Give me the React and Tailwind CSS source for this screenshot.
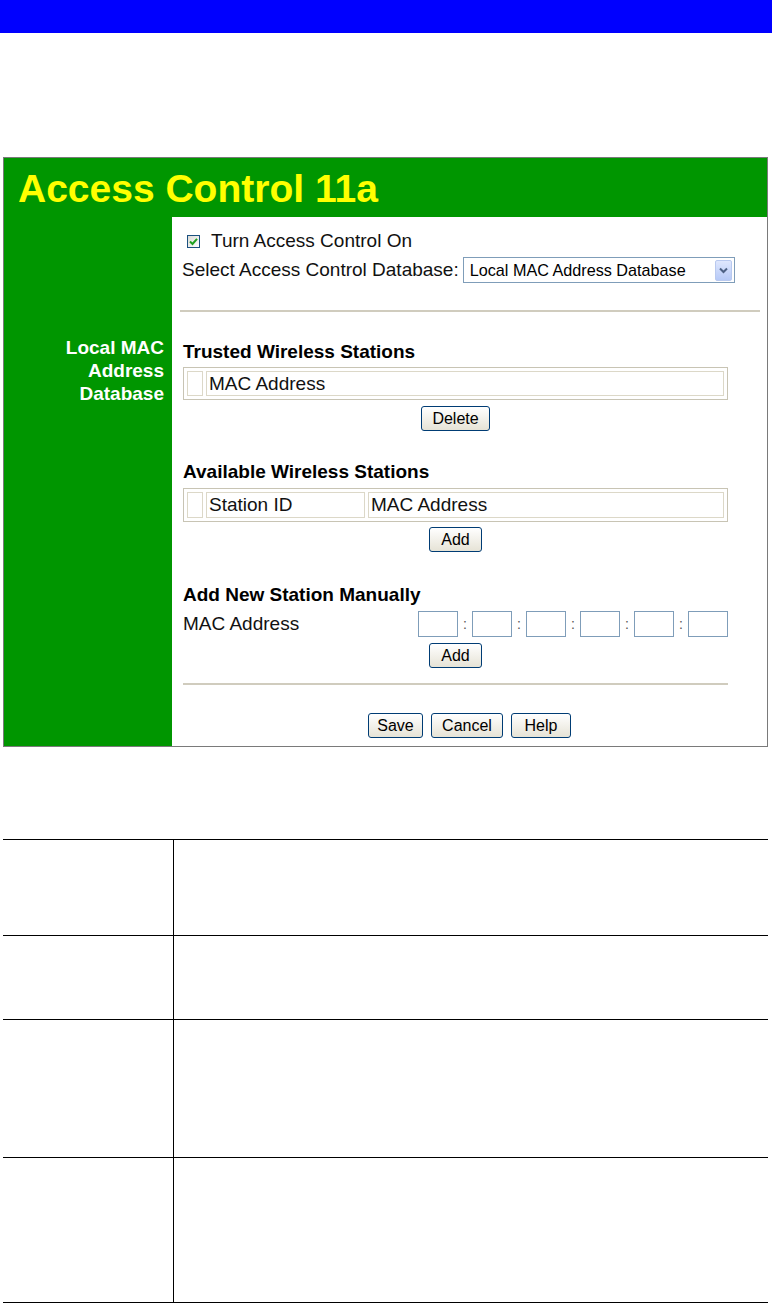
import React from 'react';

const font = "font-['Liberation_Sans',Arial,sans-serif]";

function XpButton({ children, w }) {
  return (
    <button
      className={`${w} h-[25px] rounded-[3px] border border-[#003c74] bg-gradient-to-b from-white to-[#e6e3d6] text-[16px] leading-none text-black`}
    >
      {children}
    </button>
  );
}

function Cell({ children, className = '' }) {
  return (
    <div className={`h-full border border-[#dcd8c8] pl-[2px] flex items-center text-[19px] leading-[22px] text-[#111] ${className}`}>
      {children}
    </div>
  );
}

export default function App() {
  const macBoxes = [0, 1, 2, 3, 4, 5];
  const rows = ['h-[96px]', 'h-[84px]', 'h-[138px]', 'h-[145px]'];

  return (
    <div className={`w-[772px] h-[1304px] bg-white ${font}`}>
      {/* top bar */}
      <div className="h-[33px] bg-[#0000ff]" />

      {/* router screen */}
      <div className="mt-[124px] ml-[3px] w-[765px] border border-[#7a7a7a] bg-[#009600]">
        <div className="h-[59px] pl-[14px] pt-[9px]">
          <h1 className="text-[39px] leading-[44px] font-bold text-[#ffff00]">Access Control 11a</h1>
        </div>

        <div className="flex">
          <div className="w-[168px] pt-[119px] pr-[8px] text-right text-white font-bold text-[19px] leading-[23px]">
            Local MAC<br />Address<br />Database
          </div>

          <div className="w-[595px] bg-white pt-[13px] pb-[8px] text-[#111]">
            {/* enable */}
            <div className="h-[22px] pl-[15px] flex items-center gap-[11px] text-[19px] leading-[22px]">
              <span className="w-[13px] h-[13px] border border-[#1c5180] bg-gradient-to-br from-[#dcdcd7] to-white flex items-center justify-center">
                <svg width="9" height="9" viewBox="0 0 9 9">
                  <path d="M1 4.5 L3.5 7 L8 1.8" fill="none" stroke="#21a121" strokeWidth="2" />
                </svg>
              </span>
              <span>Turn Access Control On</span>
            </div>

            {/* database select */}
            <div className="mt-[5px] h-[26px] pl-[10px] flex items-center gap-[4px] text-[19px] leading-[22px]">
              <span>Select Access Control Database:</span>
              <div className="w-[272px] h-[26px] border border-[#7f9db9] flex items-center justify-between pl-[6px] pr-[2px] text-[16.2px] text-black">
                <span>Local MAC Address Database</span>
                <span className="w-[17px] h-[21px] rounded-[2px] border border-[#b9c9ef] bg-gradient-to-b from-[#dfe7fd] to-[#b6c9f7] flex items-center justify-center">
                  <svg width="9" height="7" viewBox="0 0 9 7">
                    <path d="M1 1.5 L4.5 5 L8 1.5" fill="none" stroke="#4d6185" strokeWidth="2" />
                  </svg>
                </span>
              </div>
            </div>

            <div className="mt-[27px] ml-[8px] w-[580px] h-[2px] bg-[#d0ccbe]" />

            <div className="ml-[11px] w-[545px]">
              {/* trusted */}
              <h2 className="mt-[29px] text-[19px] leading-[22px] font-bold text-black">Trusted Wireless Stations</h2>
              <div className="mt-[4px] h-[33px] border border-[#c8c4b4] p-[3px] flex gap-[3px]">
                <Cell className="w-[16px]" />
                <Cell className="flex-1">MAC Address</Cell>
              </div>
              <div className="mt-[6px] flex justify-center">
                <XpButton w="w-[69px]">Delete</XpButton>
              </div>

              {/* available */}
              <h2 className="mt-[30px] text-[19px] leading-[22px] font-bold text-black">Available Wireless Stations</h2>
              <div className="mt-[5px] h-[34px] border border-[#c8c4b4] p-[3px] flex gap-[3px]">
                <Cell className="w-[16px]" />
                <Cell className="w-[159px]">Station ID</Cell>
                <Cell className="flex-1">MAC Address</Cell>
              </div>
              <div className="mt-[5px] flex justify-center">
                <XpButton w="w-[53px]">Add</XpButton>
              </div>

              {/* manual */}
              <h2 className="mt-[32px] text-[19px] leading-[22px] font-bold text-black">Add New Station Manually</h2>
              <div className="mt-[5px] h-[26px] flex items-center justify-between text-[19px] leading-[22px]">
                <span>MAC Address</span>
                <div className="flex items-center">
                  {macBoxes.map(i => (
                    <React.Fragment key={i}>
                      {i > 0 && <span className="w-[14px] text-center text-[14px] text-[#555]">:</span>}
                      <span className="w-[40px] h-[26px] border border-[#7f9db9] bg-white" />
                    </React.Fragment>
                  ))}
                </div>
              </div>
              <div className="mt-[6px] flex justify-center">
                <XpButton w="w-[53px]">Add</XpButton>
              </div>

              <div className="mt-[15px] h-[2px] bg-[#d0ccbe]" />
            </div>

            <div className="mt-[28px] flex justify-center gap-[8px]">
              <XpButton w="w-[55px]">Save</XpButton>
              <XpButton w="w-[72px]">Cancel</XpButton>
              <XpButton w="w-[60px]">Help</XpButton>
            </div>
          </div>
        </div>
      </div>

      {/* description table */}
      <div className="mt-[92px] ml-[3px] w-[765px] border-t border-black">
        {rows.map((h, i) => (
          <div key={i} className={`${h} flex border-b border-black`}>
            <div className="w-[171px] border-r border-black" />
            <div className="flex-1" />
          </div>
        ))}
      </div>
    </div>
  );
}
